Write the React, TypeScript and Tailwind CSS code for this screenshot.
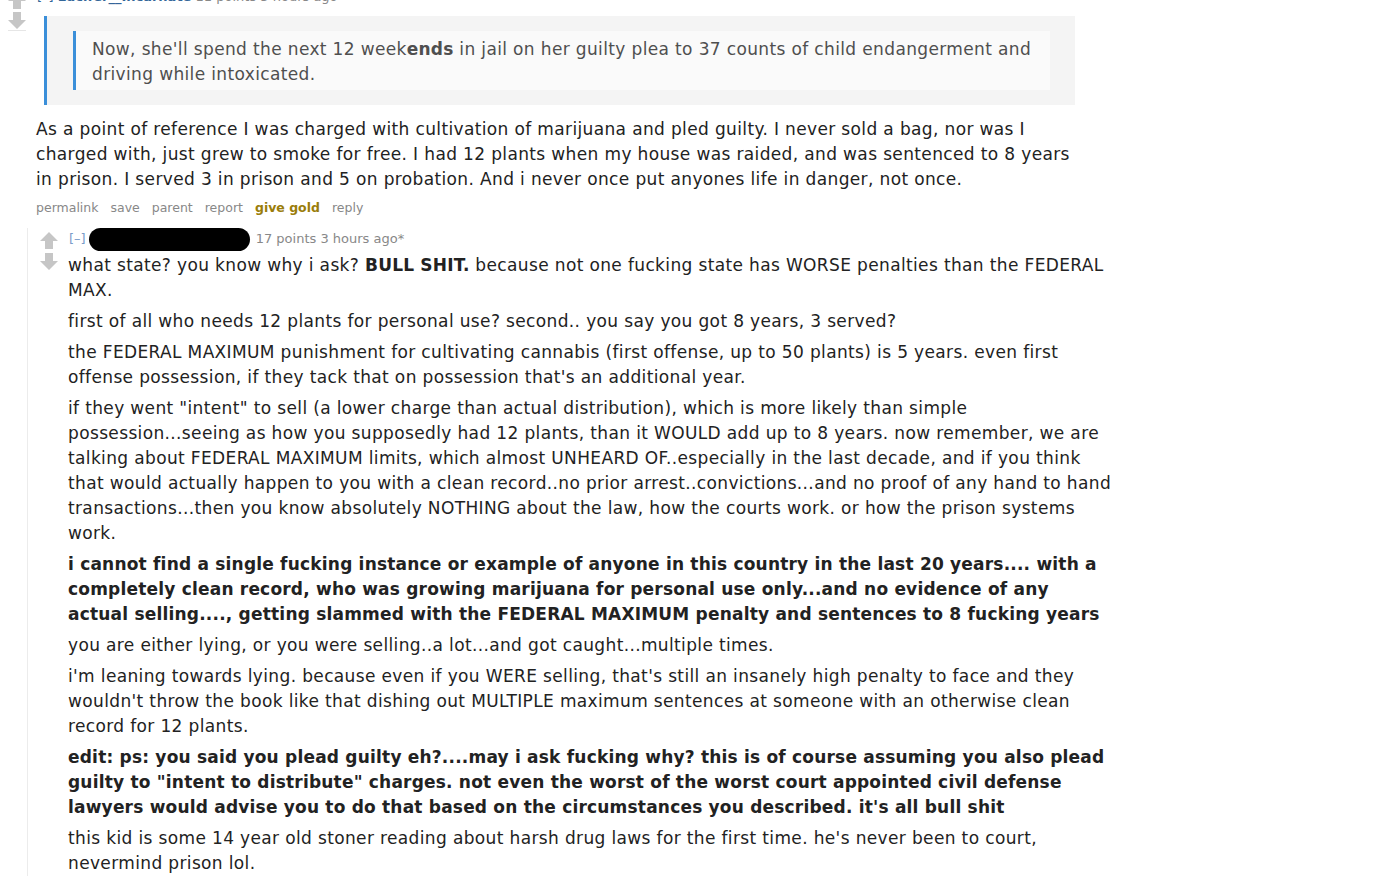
import React from 'react';

const Arrow = ({ down = false }: { down?: boolean }) => (
  <svg width="18" height="17" viewBox="0 0 18 17" className={down ? 'rotate-180' : ''}>
    <polygon points="9,0 18,9 13,9 13,17 5,17 5,9 0,9" fill="#c6c6c6" />
  </svg>
);

const Buttons = () => (
  <div className="flex gap-[12px] text-[12.5px] leading-[18px] tracking-normal text-[#888]">
    <span>permalink</span>
    <span>save</span>
    <span>parent</span>
    <span>report</span>
    <span className="font-bold text-[#9a7d0a]">give gold</span>
    <span>reply</span>
  </div>
);

const App = () => {
  return (
    <div
      className="w-[1380px] h-[885px] overflow-hidden bg-white text-[#222] text-[17px] leading-[25px] tracking-[0.36px]"
      style={{ fontFamily: '"DejaVu Sans", Verdana, sans-serif' }}
    >
      {/* parent comment, cut off at the top */}
      <div className="flex -mt-[12px]">
        <div className="w-[36px] flex flex-col items-start pl-[8px] pt-[4px] gap-[3px]">
          <Arrow />
          <div className="border-b border-[#e6e6e6] pb-[1px]">
            <Arrow down />
          </div>
        </div>
        <div className="flex-1">
          <div className="text-[13px] leading-[18px] tracking-normal text-[#888] pl-[1px]">
            <span className="text-[#369]">[–]</span>{' '}
            <span className="font-bold text-[#369]">Lucifer__Incarnate</span>{' '}
            <span>11 points 3 hours ago</span>
          </div>
          <div className="ml-[8px] mt-[10px] w-[1031px] bg-[#f4f4f4] border-l-[3px] border-[#3b8fd9] pl-[26px] pr-[25px] pt-[15px] pb-[15px]">
            <div className="bg-[#fafafa] border-l-[3px] border-[#3b8fd9] pl-[16px] pr-[2px] pt-[6px] pb-[3px] text-[#4f4f4f]">
              Now, she'll spend the next 12 week<b className="tracking-[0.2px]">ends</b> in jail on her guilty plea to 37 counts of child endangerment and driving while intoxicated.
            </div>
          </div>
          <p className="mt-[12px] w-[1045px]">
            As a point of reference I was charged with cultivation of marijuana and pled guilty. I never sold a bag, nor was I charged with, just grew to smoke for free. I had 12 plants when my house was raided, and was sentenced to 8 years in prison. I served 3 in prison and 5 on probation. And i never once put anyones life in danger, not once.
          </p>
          <div className="mt-[7px]">
            <Buttons />
          </div>
        </div>
      </div>

      {/* child comment */}
      <div className="ml-[27px] mt-[11px] border-l border-[#ececec] flex">
        <div className="w-[41px] flex flex-col items-start pl-[12px] pt-[4px] gap-[4px]">
          <Arrow />
          <Arrow down />
        </div>
        <div className="w-[1043px]">
          <div className="flex items-center text-[13px] leading-[18px] tracking-normal text-[#888] h-[22px]">
            <span className="text-[#7a9cc9]">[–]</span>
            <span className="ml-[3px] inline-block w-[161px] h-[23px] bg-black rounded-[12px]" />
            <span className="ml-[6px]">17 points 3 hours ago*</span>
          </div>
          <div className="flex flex-col gap-[6px] mt-[3px] -ml-[1px]">
            <p>
              what state? you know why i ask? <b className="tracking-[0.2px]">BULL SHIT.</b> because not one fucking state has WORSE penalties than the FEDERAL MAX.
            </p>
            <p>first of all who needs 12 plants for personal use? second.. you say you got 8 years, 3 served?</p>
            <p>
              the FEDERAL MAXIMUM punishment for cultivating cannabis (first offense, up to 50 plants) is 5 years. even first offense possession, if they tack that on possession that's an additional year.
            </p>
            <p>
              if they went "intent" to sell (a lower charge than actual distribution), which is more likely than simple possession...seeing as how you supposedly had 12 plants, than it WOULD add up to 8 years. now remember, we are talking about FEDERAL MAXIMUM limits, which almost UNHEARD OF..especially in the last decade, and if you think that would actually happen to you with a clean record..no prior arrest..convictions...and no proof of any hand to hand transactions...then you know absolutely NOTHING about the law, how the courts work. or how the prison systems work.
            </p>
            <p className="font-bold tracking-[0.2px]">
              i cannot find a single fucking instance or example of anyone in this country in the last 20 years.... with a completely clean record, who was growing marijuana for personal use only...and no evidence of any actual selling...., getting slammed with the FEDERAL MAXIMUM penalty and sentences to 8 fucking years
            </p>
            <p>you are either lying, or you were selling..a lot...and got caught...multiple times.</p>
            <p>
              i'm leaning towards lying. because even if you WERE selling, that's still an insanely high penalty to face and they wouldn't throw the book like that dishing out MULTIPLE maximum sentences at someone with an otherwise clean record for 12 plants.
            </p>
            <p className="font-bold tracking-[0.2px]">
              edit: ps: you said you plead guilty eh?....may i ask fucking why? this is of course assuming you also plead guilty to "intent to distribute" charges. not even the worst of the worst court appointed civil defense lawyers would advise you to do that based on the circumstances you described. it's all bull shit
            </p>
            <p>
              this kid is some 14 year old stoner reading about harsh drug laws for the first time. he's never been to court, nevermind prison lol.
            </p>
          </div>
        </div>
      </div>
    </div>
  );
};

export default App;
